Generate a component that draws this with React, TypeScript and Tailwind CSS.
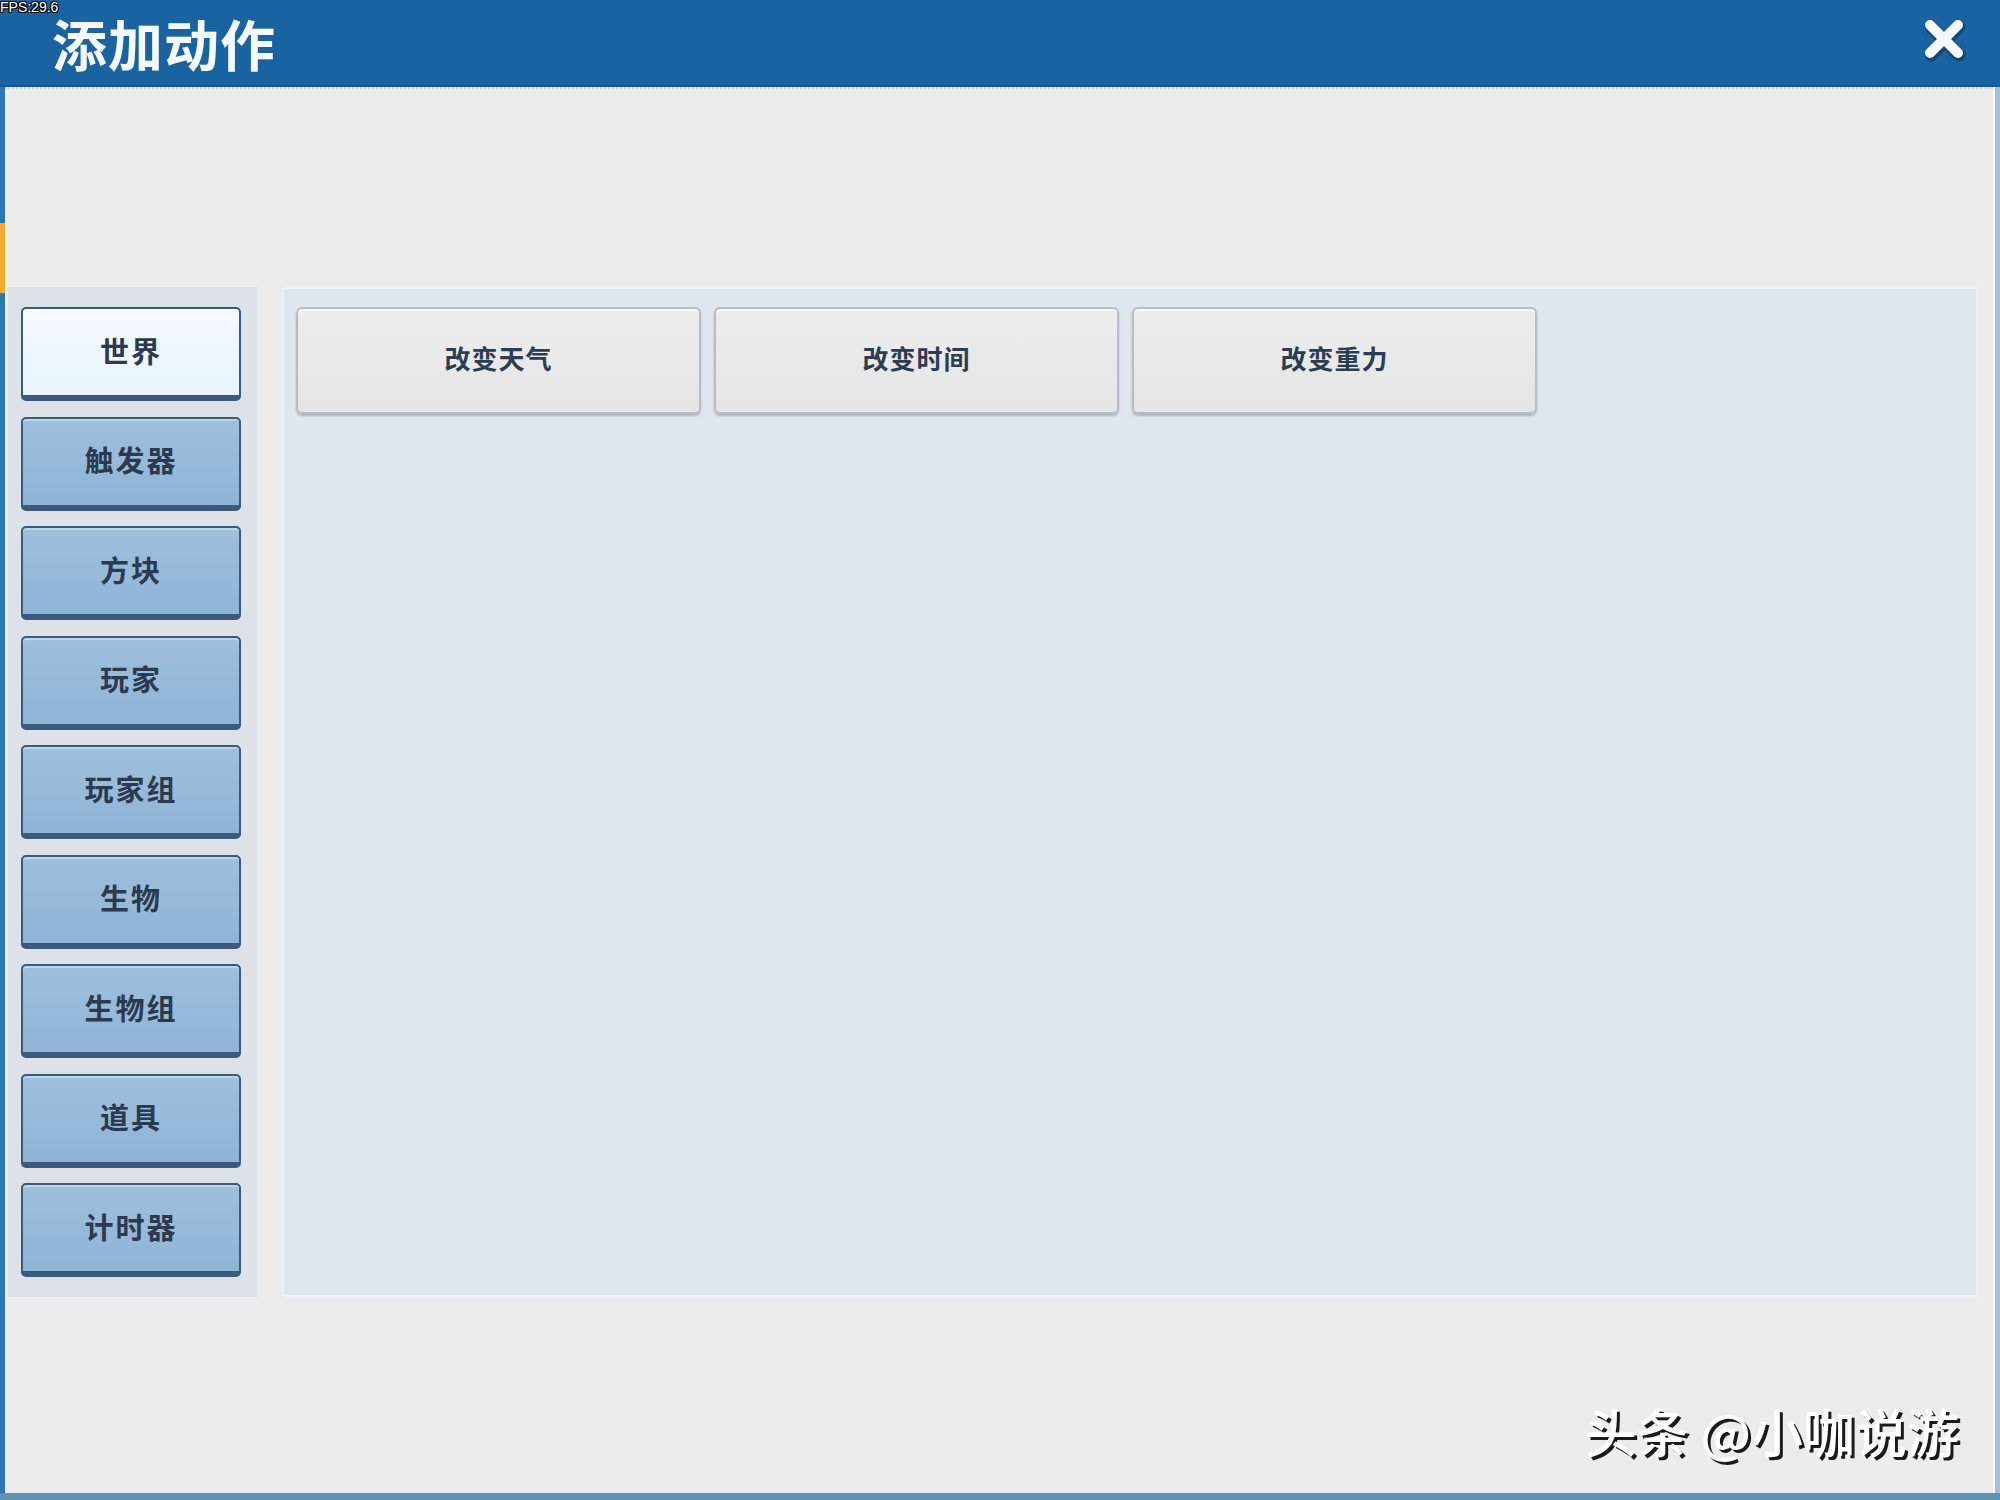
import React from 'react';

const categories = ['世界', '触发器', '方块', '玩家', '玩家组', '生物', '生物组', '道具', '计时器'];
const actions = ['改变天气', '改变时间', '改变重力'];

const cjk = { fontFamily: '"Noto Sans CJK SC", "Noto Sans", sans-serif' };

const CloseIcon: React.FC = () => (
  <svg width="50" height="50" viewBox="0 0 50 50">
    <g stroke="#16304a" strokeWidth="13" strokeLinecap="round" opacity="0.55">
      <line x1="11" y1="12" x2="39" y2="40" />
      <line x1="39" y1="12" x2="11" y2="40" />
    </g>
    <g stroke="#f4f8fb" strokeWidth="10" strokeLinecap="round">
      <line x1="10" y1="10" x2="38" y2="38" />
      <line x1="38" y1="10" x2="10" y2="38" />
    </g>
  </svg>
);

export default function App() {
  const selected = '世界';

  return (
    <div className="relative w-[2000px] h-[1500px] flex flex-col bg-[#ececec] overflow-hidden" style={cjk}>
      {/* title bar */}
      <div className="relative h-[87px] shrink-0 bg-[#1964a0] flex items-center justify-between pl-[52px] pr-[30px] border-b-2 border-[#175a91]">
        <span
          className="absolute left-0 top-0 text-[14px] leading-[14px] text-white font-[Liberation_Sans]"
          style={{ textShadow: '1px 1px 0 #000, -1px -1px 0 #000, 1px -1px 0 #000, -1px 1px 0 #000' }}
        >
          FPS:29.6
        </span>
        <h1 className="text-[55px] leading-[44px] font-bold text-[#f4f9fd] mt-[-2px] tracking-[1px]">添加动作</h1>
        <div className="mt-[-6px]">
          <CloseIcon />
        </div>
      </div>

      {/* body */}
      <div className="flex-1 flex">
        <div className="w-[5px] flex flex-col">
          <div className="h-[136px] bg-[#2b79b0]" />
          <div className="h-[70px] bg-[#f0ad2c]" />
          <div className="flex-1 bg-[#2b79b0]" />
        </div>

        <div className="relative flex-1 flex flex-col bg-[#ececec] border-t-2 border-dotted border-[#d0d4d8]">
          <div className="h-[198px]" />
          <div className="flex h-[1010px]">
            {/* category list */}
            <div className="ml-[3px] w-[249px] bg-[#dce2e8] pt-[20px] pl-[13px] flex flex-col gap-[15.5px]">
              {categories.map((c) => {
                const active = c === selected;
                return (
                  <div
                    key={c}
                    className={
                      active
                        ? 'w-[220px] h-[94px] rounded-[5px] border-2 border-b-[6px] border-[#3c5a7b] bg-gradient-to-b from-[#f5fafe] to-[#e8f3fb] flex items-center justify-center shadow-[inset_0_2px_0_#ffffff]'
                        : 'w-[220px] h-[94px] rounded-[5px] border-2 border-b-[6px] border-[#3c5a7b] bg-gradient-to-b from-[#9fc0dd] to-[#8fb4d5] flex items-center justify-center shadow-[inset_0_2px_0_#bcd5ea]'
                    }
                  >
                    <span className="mb-[3px] text-[29px] font-bold text-[#2b3a4e] tracking-[2px]">{c}</span>
                  </div>
                );
              })}
            </div>

            {/* action grid */}
            <div className="ml-[25px] w-[1696px] bg-[#dfe6ee] border-2 border-[#eef2f6] pt-[18px] pl-[12px] flex gap-[13px] items-start">
              {actions.map((a) => (
                <div
                  key={a}
                  className="w-[405px] h-[107px] rounded-[6px] border-2 border-[#b9bdc2] bg-gradient-to-b from-[#ededed] to-[#e5e5e5] shadow-[0_2px_2px_rgba(80,90,100,0.35),inset_0_2px_0_#f8f8f8] flex items-center justify-center"
                >
                  <span className="mb-[7px] text-[26px] font-bold text-[#2d3d51] tracking-[1px]">{a}</span>
                </div>
              ))}
            </div>
          </div>

          <span
            className="absolute right-[34px] bottom-[36px] text-[52px] leading-none font-medium text-white"
            style={{ textShadow: '3px 3px 0 #1a1a1a' }}
          >
            头条 @小咖说游
          </span>
        </div>

        <div className="w-[7px] bg-[#9cc2dd] border-l-2 border-white" />
      </div>
      <div className="h-[7px] shrink-0 bg-[#5c93b0]" />
    </div>
  );
}
